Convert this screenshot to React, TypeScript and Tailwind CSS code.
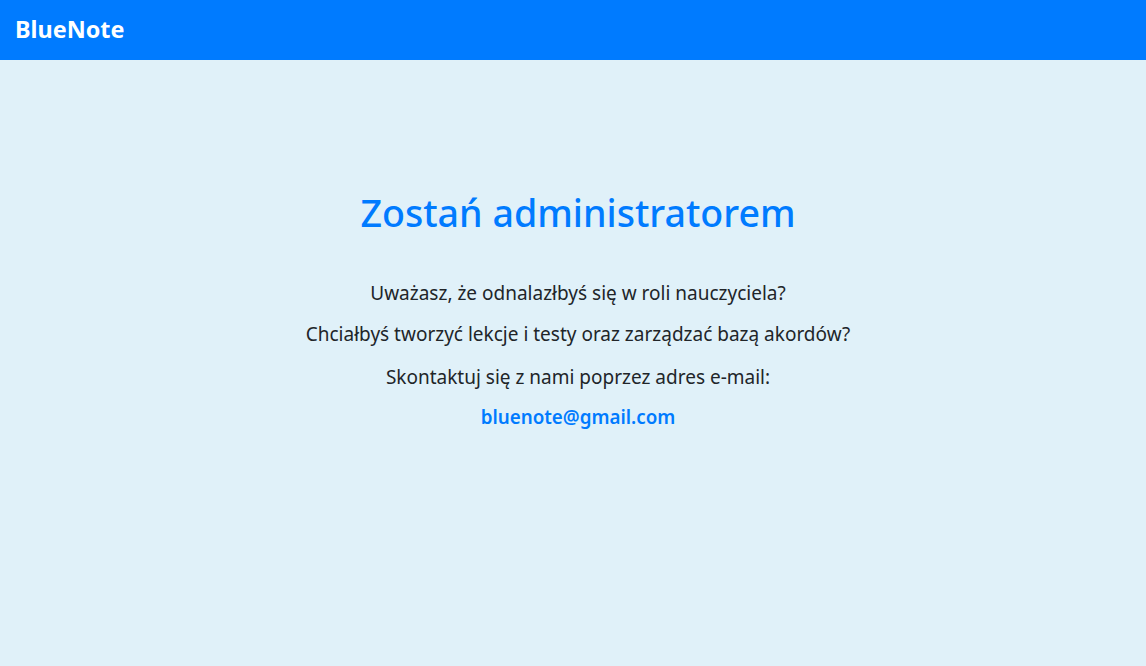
import React from 'react';

const App = () => {
  return (
    <div className="min-h-[666px] bg-[#e0f1f9] font-['Noto_Sans',sans-serif] text-[#212529]">
      <nav className="flex h-[60px] items-center bg-[#007bff] px-[15px]">
        <span className="text-[23.4px] font-bold text-white">BlueNote</span>
      </nav>
      <main className="flex flex-col items-center pl-[10px] pt-[130px] text-center">
        <h1 className="mb-[45px] text-[37.6px] font-medium leading-[1.2] text-[#007bff]">Zostań administratorem</h1>
        <p className="mb-[14px] text-[19px] leading-[27px]">Uważasz, że odnalazłbyś się w roli nauczyciela?</p>
        <p className="mb-[16px] text-[19px] leading-[27px]">Chciałbyś tworzyć lekcje i testy oraz zarządzać bazą akordów?</p>
        <p className="mb-[12px] text-[19px] leading-[27px]">Skontaktuj się z nami poprzez adres e-mail:</p>
        <a href="#" className="mt-[1px] text-[18.8px] font-semibold leading-[27px] text-[#007bff]">bluenote@gmail.com</a>
      </main>
    </div>
  );
};

export default App;
